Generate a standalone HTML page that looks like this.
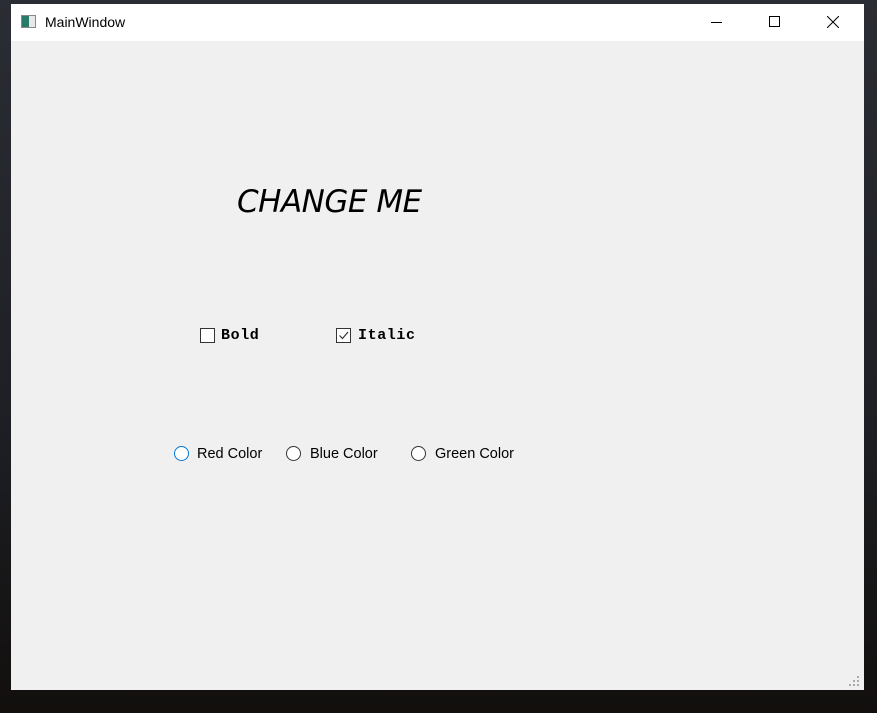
<!DOCTYPE html>
<html><head><style>
body{margin:0;width:877px;height:713px;background:linear-gradient(180deg,#2a2d33 0%,#1d1f24 60%,#120f0d 100%);position:relative;overflow:hidden;font-family:"Liberation Sans",sans-serif}
.win{position:absolute;left:11px;top:4px;width:853px;height:686px;background:#f0f0f0}
.tb{position:absolute;left:0;top:0;width:853px;height:37px;background:#fff}
.t{position:absolute;font-size:14px;color:#000}
.cb{position:absolute;width:13px;height:13px;border:1px solid #333;background:#fff;box-sizing:border-box}
.rb{position:absolute;width:15px;height:15px;border:1px solid #333;border-radius:50%;background:#fff;box-sizing:border-box}
.mono{font-family:"Liberation Mono",monospace;font-weight:bold;font-size:15px;letter-spacing:0.6px}
.r{font-size:14.5px}
</style></head><body>
<div class="win">
<div class="tb">
<div style="position:absolute;left:10px;top:11px;width:15px;height:13px;border:1px solid #888;box-sizing:border-box;background:linear-gradient(90deg,#2a7a6a 0 55%,#e8e8e8 55%)"></div>
<div class="t" style="left:34px;top:10px">MainWindow</div>
<div style="position:absolute;left:700px;top:18px;width:11px;height:1px;background:#000"></div>
<div style="position:absolute;left:758px;top:12px;width:11px;height:11px;border:1px solid #000;box-sizing:border-box"></div>
<svg style="position:absolute;left:816px;top:12px" width="12" height="12"><path d="M0 0L12 12M12 0L0 12" stroke="#000" stroke-width="1"/></svg>
</div>
<div style="position:absolute;left:226px;top:180px;font-size:31px;font-style:italic;color:#000;font-family:'DejaVu Sans',sans-serif;font-weight:normal;letter-spacing:-0.5px">CHANGE ME</div>
<div class="cb" style="left:189px;top:324px;width:15px;height:15px"></div>
<div class="t mono" style="left:210px;top:323px">Bold</div>
<div class="cb" style="left:325px;top:324px;width:15px;height:15px"><svg width="13" height="13" style="position:absolute;left:0;top:0"><path d="M2.5 6.5L5.5 9.5L11 3" stroke="#333" stroke-width="1.2" fill="none"/></svg></div>
<div class="t mono" style="left:347px;top:323px">Italic</div>
<div class="rb" style="left:163px;top:442px;border-color:#0078d7"></div>
<div class="t r" style="left:186px;top:442px">Red Color</div>
<div class="rb" style="left:275px;top:442px"></div>
<div class="t r" style="left:299px;top:442px">Blue Color</div>
<div class="rb" style="left:400px;top:442px"></div>
<div class="t r" style="left:424px;top:442px">Green Color</div>
<svg style="position:absolute;left:838px;top:672px" width="12" height="12" fill="#aaa"><rect x="8" y="0" width="2" height="2"/><rect x="8" y="4" width="2" height="2"/><rect x="4" y="4" width="2" height="2"/><rect x="8" y="8" width="2" height="2"/><rect x="4" y="8" width="2" height="2"/><rect x="0" y="8" width="2" height="2"/></svg>
</div>
</body></html>
